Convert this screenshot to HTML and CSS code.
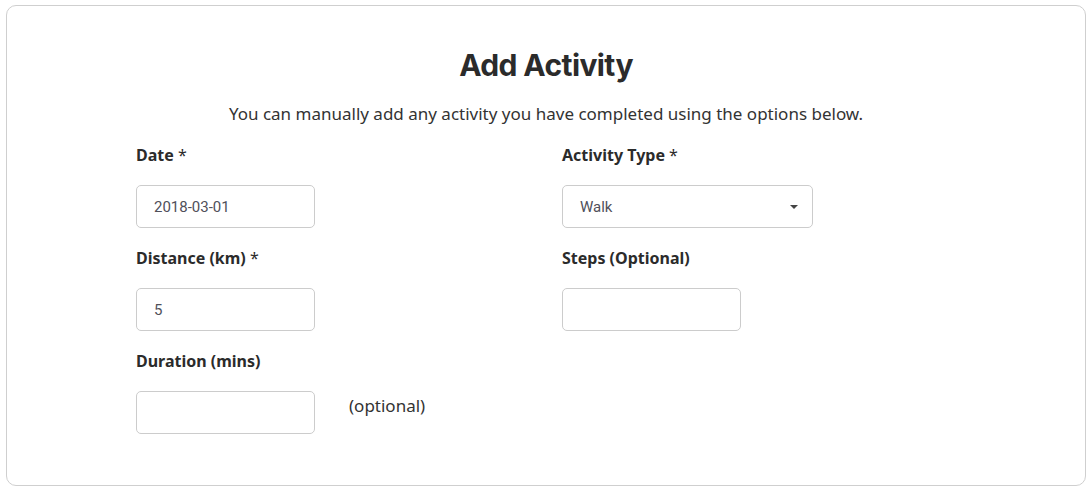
FILE: index.html
```html
<!DOCTYPE html>
<html>
<head>
<meta charset="utf-8">
<link rel="stylesheet" href="styles.css">
</head>
<body>
<div class="card">
  <h1 class="title">Add Activity</h1>
  <p class="intro">You can manually add any activity you have completed using the options below.</p>
  <div class="grid">
    <div class="field">
      <label class="label">Date <span class="req">*</span></label>
      <div class="input input-date">2018-03-01</div>
    </div>
    <div class="field">
      <label class="label">Activity Type <span class="req">*</span></label>
      <div class="input input-select">Walk<span class="caret"></span></div>
    </div>
    <div class="field">
      <label class="label">Distance (km) <span class="req">*</span></label>
      <div class="input input-date">5</div>
    </div>
    <div class="field">
      <label class="label">Steps (Optional)</label>
      <div class="input input-date"></div>
    </div>
    <div class="field">
      <label class="label">Duration (mins)</label>
      <div class="inline">
        <div class="input input-date"></div>
        <span class="hint">(optional)</span>
      </div>
    </div>
  </div>
</div>
</body>
</html>
```
FILE: styles.css
```css
* { box-sizing: border-box; }
html, body { margin: 0; padding: 0; background: #fff; }
body { font-family: "Noto Sans", sans-serif; color: #2d2d2d; }
.card {
  margin: 5px 6px 0 6px;
  width: 1080px;
  height: 481px;
  border: 1px solid #cfcfcf;
  border-radius: 10px;
  padding-top: 41px;
}
.title {
  margin: 0;
  text-align: center;
  font-family: Inter, sans-serif;
  font-weight: 700;
  font-size: 30px;
  line-height: 36px;
  letter-spacing: -0.6px;
  color: #2b2b2b;
}
.intro {
  margin: 20px 0 0 0;
  text-align: center;
  font-size: 17px;
  line-height: 22px;
  color: #333;
}
.grid {
  margin: 19px 0 0 129px;
  display: grid;
  grid-template-columns: 426px 300px;
  row-gap: 19px;
}
.label {
  display: block;
  font-weight: 700;
  font-size: 16px;
  line-height: 22px;
  color: #2b2b2b;
}
.req { font-weight: 400; }
.input {
  margin-top: 19px;
  height: 43px;
  border: 1px solid #cccccc;
  border-radius: 5px;
  font-family: Roboto, sans-serif;
  font-size: 15px;
  color: #50505a;
  display: flex;
  align-items: center;
  padding-left: 17px;
}
.input-date { width: 179px; }
.input-select { width: 251px; position: relative; }
.caret {
  position: absolute;
  right: 14px;
  top: 19px;
  width: 0; height: 0;
  border-left: 4px solid transparent;
  border-right: 4px solid transparent;
  border-top: 4px solid #444;
}
.inline { display: flex; align-items: flex-start; gap: 34px; }
.hint {
  margin-top: 22px;
  font-size: 17px;
  color: #333;
}
```
